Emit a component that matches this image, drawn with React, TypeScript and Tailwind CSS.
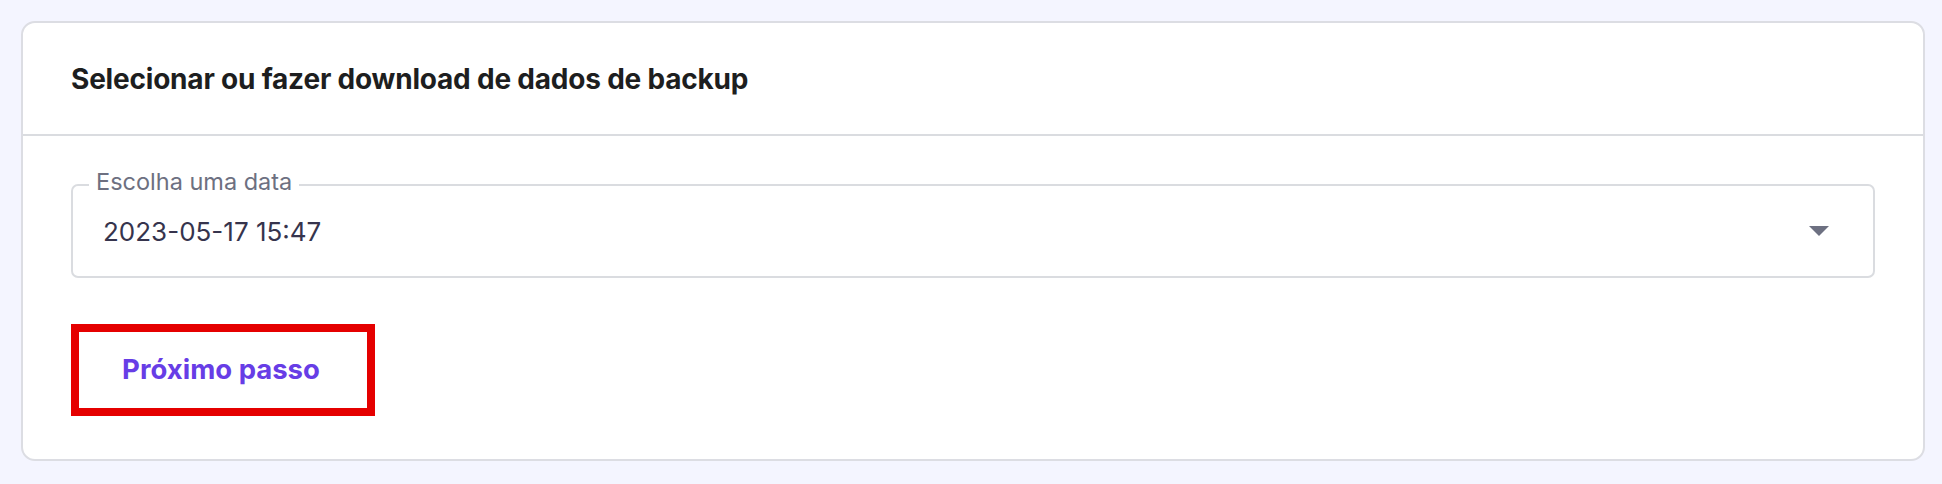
import { useState } from "react";

function DateSelect({ label, value }: { label: string; value: string }) {
  return (
    <div className="relative">
      <span className="absolute left-[18px] top-[-18px] bg-white px-[7px] text-[23.5px] leading-[32px] text-[#6d7081]">
        {label}
      </span>
      <div className="flex h-[94px] items-center justify-between rounded-[7px] border-2 border-[#dadce0] pl-[30px] pr-[44px]">
        <span className="text-[26px] text-[#36344d]">{value}</span>
        <svg width="20" height="10" viewBox="0 0 20 10" aria-hidden>
          <path d="M0 0 L20 0 L10 10 Z" fill="#6d7081" />
        </svg>
      </div>
    </div>
  );
}

export default function App() {
  const [date] = useState("2023-05-17 15:47");

  return (
    <div className="min-h-[484px] bg-[#f4f5ff] py-[21px] pl-[21px] pr-[17px] font-['Inter',sans-serif]">
      <div className="h-[440px] rounded-[14px] border-2 border-[#dcdde3] bg-white">
        <div className="flex h-[113px] items-center border-b-2 border-[#dadce0] px-[48px]">
          <h2 className="text-[28px] font-bold tracking-[-0.2px] text-[#1d1e20]">
            Selecionar ou fazer download de dados de backup
          </h2>
        </div>
        <div className="px-[48px] pt-[48px]">
          <DateSelect label="Escolha uma data" value={date} />
          <button className="mt-[46px] flex h-[92px] w-[304px] items-center justify-center border-[8px] border-[#e50000] pr-[4px] text-[27.5px] font-bold text-[#673de6]">
            Próximo passo
          </button>
        </div>
      </div>
    </div>
  );
}
